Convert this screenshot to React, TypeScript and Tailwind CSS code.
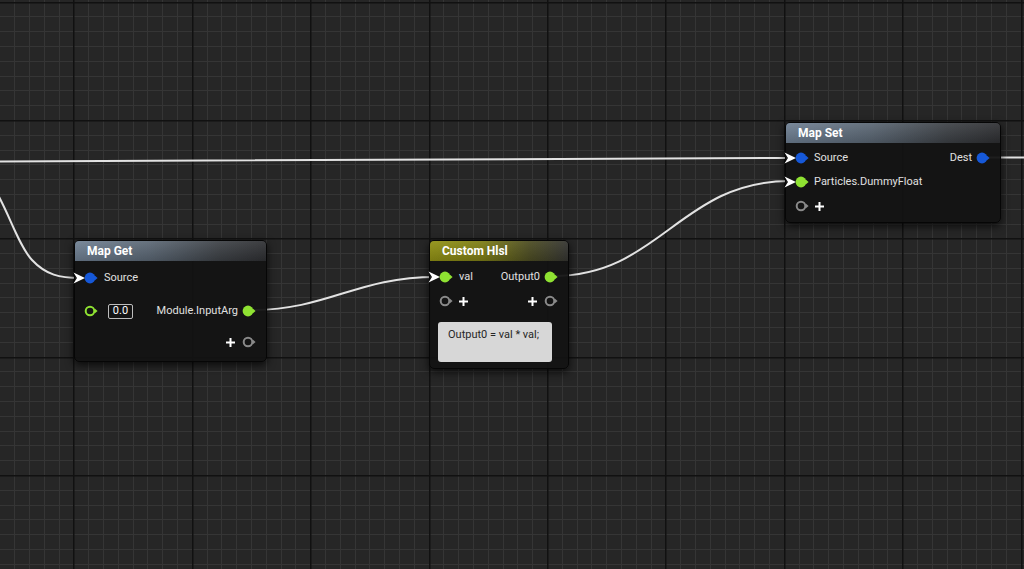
import type { ReactNode } from 'react'

const W = 1024
const H = 569
const BLUE = '#1658d8'
const GREEN = '#8fe232'
const GRAY = '#8a8a8a'

// grid geometry measured off the editor canvas
const STEP = 118.4 / 8
const vLines = Array.from({ length: 80 }, (_, i) => i - 6)
  .map((k) => ({ x: Math.round(73.3 + STEP * k), major: k % 8 === 0 }))
  .filter((l) => l.x >= -2 && l.x <= W + 2)
const hLines = Array.from({ length: 50 }, (_, i) => i - 10)
  .map((k) => ({ y: Math.round(120 + 14.79 * k), major: k % 8 === 0 }))
  .filter((l) => l.y >= -2 && l.y <= H + 2)

type PinProps = { color: string; hollow?: boolean; arrow?: boolean }

const InPin = ({ color, hollow, arrow }: PinProps) => (
  <svg width="24" height="12" viewBox="0 0 24 12" className="ml-[-1px] shrink-0 overflow-visible">
    {arrow && <path d="M-0.5 0.5 L11 6 L-0.5 11.5 L3 6 Z" fill="#ffffff" />}
    {hollow ? (
      <circle cx="16" cy="6" r="4.3" fill="none" stroke={color} strokeWidth="2" />
    ) : (
      <circle cx="16" cy="6" r="5.4" fill={color} />
    )}
    <path d="M21 3.8 L23.6 6 L21 8.2 Z" fill={color} />
  </svg>
)

const OutPin = ({ color, hollow }: PinProps) => (
  <svg width="14" height="12" viewBox="0 0 14 12" className="mr-[9px] shrink-0 overflow-visible">
    {hollow ? (
      <circle cx="5" cy="6" r="4.3" fill="none" stroke={color} strokeWidth="2" />
    ) : (
      <circle cx="5" cy="6" r="5.4" fill={color} />
    )}
    <path d="M10 3.8 L12.6 6 L10 8.2 Z" fill={color} />
  </svg>
)

const Plus = ({ className = '' }: { className?: string }) => (
  <svg width="9" height="9" viewBox="0 0 9 9" className={`shrink-0 ${className}`}>
    <path d="M4.5 0 V9 M0 4.5 H9" stroke="#ffffff" strokeWidth="2" />
  </svg>
)

type NodeProps = {
  title: string
  header: string
  className: string
  children: ReactNode
}

const Node = ({ title, header, className, children }: NodeProps) => (
  <div
    className={`absolute rounded-[5px] border border-[#060606] bg-[#131313]/95 text-[11px] text-[#e0e0e0] shadow-[0_3px_8px_rgba(0,0,0,0.75)] ${className}`}
  >
    <div className={`flex h-[20px] items-center rounded-t-[4px] pl-[12px] text-[12px] font-bold text-white ${header}`}>
      {title}
    </div>
    {children}
  </div>
)

const STEEL =
  'bg-[linear-gradient(180deg,rgba(255,255,255,0.08),rgba(0,0,0,0.16)),linear-gradient(90deg,#6f8093_0%,#5a6673_40%,#3d4146_75%,#2e2f32_100%)]'
const OLIVE =
  'bg-[linear-gradient(180deg,rgba(255,255,255,0.06),rgba(0,0,0,0.16)),linear-gradient(90deg,#929214_0%,#7e7e17_38%,#4d4d23_72%,#353532_100%)]'

export default function App() {
  return (
    <div className="relative h-[569px] w-[1024px] overflow-hidden bg-[#262626] font-[Roboto,'Liberation_Sans',sans-serif]">
      <svg width={W} height={H} className="absolute inset-0">
        {vLines.filter((l) => !l.major).map((l) => (
          <rect key={`v${l.x}`} x={l.x} y={0} width={1} height={H} fill="#353535" />
        ))}
        {hLines.filter((l) => !l.major).map((l) => (
          <rect key={`h${l.y}`} x={0} y={l.y} width={W} height={1} fill="#353535" />
        ))}
        {vLines.filter((l) => l.major).map((l) => (
          <rect key={`V${l.x}`} x={l.x} y={0} width={1.5} height={H} fill="#111111" />
        ))}
        {hLines.filter((l) => l.major).map((l) => (
          <rect key={`H${l.y}`} x={0} y={l.y} width={W} height={1.5} fill="#111111" />
        ))}
        <g fill="none" stroke="#e2e2e2" strokeWidth="2" strokeLinecap="round">
          <path d="M -2 161.5 L 790 158" />
          <path d="M 985 157.5 L 1026 157.5" />
          <path d="M -6 188 C 8 210, 18 245, 32 260 S 60 278, 80 278" />
          <path d="M 250 310 C 330 310, 355 277, 436 277" />
          <path d="M 553 276 C 660 276, 680 181, 790 181" />
        </g>
      </svg>

      <Node title="Map Get" header={STEEL} className="left-[74px] top-[240px] w-[193px]">
        <div className="pb-[7px] pt-[5px]">
          <div className="flex h-[24px] items-center">
            <InPin color={BLUE} arrow />
            <span className="ml-[6px]">Source</span>
          </div>
          <div className="mt-[9px] flex h-[24px] items-center">
            <InPin color={GREEN} hollow />
            <div className="ml-[10px] flex h-[15px] w-[25px] items-center justify-center rounded-[2px] border border-[#bdbdbd] text-[11px] text-white">
              0.0
            </div>
            <span className="ml-auto mr-[5px]">Module.InputArg</span>
            <OutPin color={GREEN} />
          </div>
          <div className="mt-[7px] flex h-[24px] items-center justify-end">
            <Plus className="mr-[8px]" />
            <OutPin color={GRAY} hollow />
          </div>
        </div>
      </Node>

      <Node title="Custom Hlsl" header={OLIVE} className="left-[429px] top-[240px] w-[140px]">
        <div className="pb-[6px] pt-[4px]">
          <div className="flex h-[24px] items-center">
            <InPin color={GREEN} arrow />
            <span className="ml-[6px]">val</span>
            <span className="ml-auto mr-[5px]">Output0</span>
            <OutPin color={GREEN} />
          </div>
          <div className="flex h-[24px] items-center">
            <InPin color={GRAY} hollow />
            <Plus className="ml-[6px]" />
            <Plus className="ml-auto mr-[8px]" />
            <OutPin color={GRAY} hollow />
          </div>
          <div className="ml-[8px] mt-[9px] h-[40px] w-[114px] rounded-[3px] bg-[#d7d7d7] pl-[10px] pt-[6px] text-[11px] leading-[14px] text-[#262626]">
            Output0 = val * val;
          </div>
        </div>
      </Node>

      <Node title="Map Set" header={STEEL} className="left-[785px] top-[122px] w-[216px]">
        <div className="pb-[4px] pt-[3px]">
          <div className="flex h-[24px] items-center">
            <InPin color={BLUE} arrow />
            <span className="ml-[5px]">Source</span>
            <span className="ml-auto mr-[5px]">Dest</span>
            <OutPin color={BLUE} />
          </div>
          <div className="flex h-[24px] items-center">
            <InPin color={GREEN} arrow />
            <span className="ml-[5px]">Particles.DummyFloat</span>
          </div>
          <div className="flex h-[24px] items-center">
            <InPin color={GRAY} hollow />
            <Plus className="ml-[6px]" />
          </div>
        </div>
      </Node>
    </div>
  )
}
